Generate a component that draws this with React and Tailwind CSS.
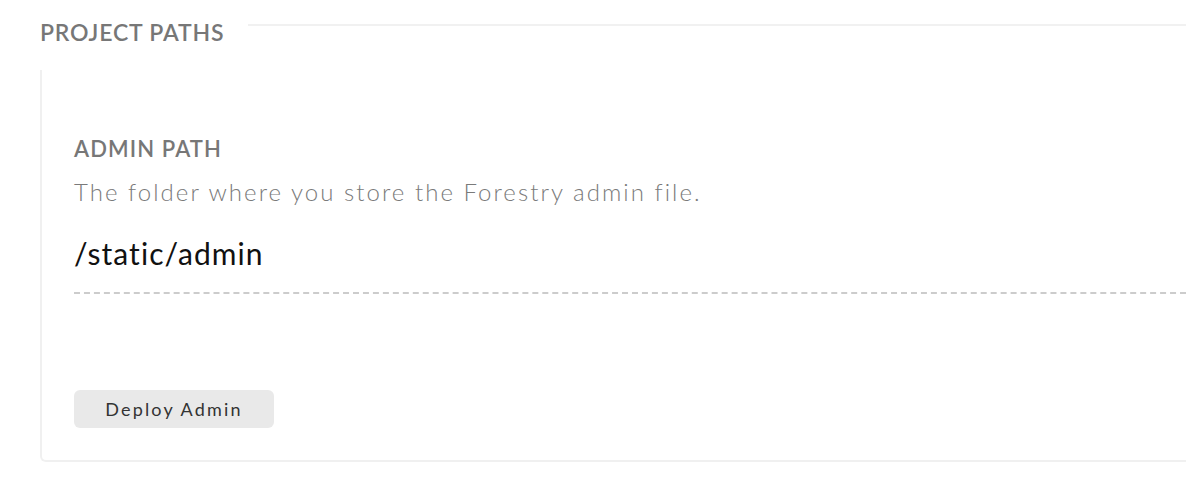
import React from "react";

export default function App() {
  return (
    <div
      className="w-full h-[486px] bg-white overflow-hidden"
      style={{ fontFamily: "Lato, 'Noto Sans', sans-serif" }}
    >
      {/* Section header */}
      <div className="flex h-[70px]">
        <h2 className="pl-10 pt-[16px] text-[23px] leading-[32px] font-semibold tracking-[0.035em] text-[#777777] whitespace-nowrap">
          PROJECT PATHS
        </h2>
        <div className="flex-1 ml-[24px] mt-[24px] h-[2px] bg-[#f1f1f1]" />
      </div>

      {/* Panel */}
      <div className="ml-10 border-l-2 border-b-2 border-[#f0f0f0] rounded-bl-md pl-[32px] pt-[65px] pb-[32px]">
        <label className="block text-[22px] leading-[28px] font-semibold tracking-[0.05em] text-[#777777]">
          ADMIN PATH
        </label>
        <p className="mt-[13px] text-[24px] leading-[32px] font-light tracking-[0.085em] text-[#7a7a7a] whitespace-nowrap">
          The folder where you store the Forestry admin file.
        </p>
        <div className="mt-[25px] pb-[19px] border-b-2 border-dashed border-[#cccccc] text-[30px] leading-[40px] tracking-[0.035em] text-[#111111]">
          /static/admin
        </div>
        <button className="mt-[96px] w-[200px] h-[38px] rounded-md bg-[#e9e9e9] text-[18px] tracking-[0.12em] text-[#333333]">
          Deploy Admin
        </button>
      </div>
    </div>
  );
}
